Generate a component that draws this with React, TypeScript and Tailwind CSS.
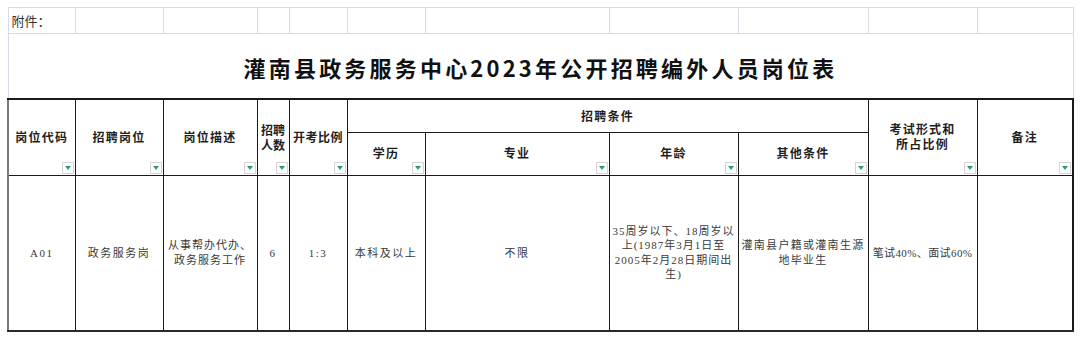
import React from "react";

const cjkSans = { fontFamily: '"Noto Sans CJK SC", "Noto Sans", sans-serif' };
const serif = { fontFamily: '"Liberation Serif", "Noto Sans CJK SC", serif' };

function Filter() {
  return (
    <span className="absolute right-[1px] bottom-[1px] w-[12px] h-[12px] bg-white border border-[#d4d4d4] flex items-center justify-center">
      <svg width="6" height="4" viewBox="0 0 6 4">
        <path d="M0 0 L6 0 L3 4 Z" fill="#2c9f69" />
      </svg>
    </span>
  );
}

const widths = [67, 88, 94, 32, 58, 78, 184, 129, 130, 109, 96];

export default function App() {
  const light = "border border-[#d6d9e8]";
  const hdBase =
    "relative border border-[#1a1a1a] text-center align-middle text-[12px] font-bold text-[#1f1f1f]";
  const hd = `${hdBase} tracking-[1.2px] leading-[14px]`;
  const dcBase =
    "border border-[#1a1a1a] text-center align-middle text-[#3a3a3a] leading-[14.5px] border-b-2 border-b-[#2a2a2a]";
  const dc = `${dcBase} text-[11px] tracking-[1.5px]`;
  return (
    <div className="w-[1080px] h-[338px] bg-white pt-[7px] pl-[7px] overflow-hidden">
      <table className="table-fixed border-collapse w-[1066px]">
        <colgroup>
          {widths.map((w, i) => (
            <col key={i} style={{ width: w }} />
          ))}
        </colgroup>
        <tbody>
          <tr className="h-[26px]">
            <td className={`${light} pl-[3px] text-[13px] text-[#333]`} style={cjkSans}>
              附件：
            </td>
            {widths.slice(1).map((_, i) => (
              <td key={i} className={light}></td>
            ))}
          </tr>
          <tr className="h-[65px]">
            <td
              colSpan={11}
              className="border border-[#d6d9e8] border-b-2 border-b-[#1a1a1a] text-center align-middle text-[22px] font-bold tracking-[3.2px] text-[#111] pt-[4px]"
              style={cjkSans}
            >
              灌南县政务服务中心2023年公开招聘编外人员岗位表
            </td>
          </tr>
          <tr className="h-[34px]" style={cjkSans}>
            <td rowSpan={2} className={`${hd} border-l-2 border-l-[#7a7a7a]`}>
              岗位代码
              <Filter />
            </td>
            <td rowSpan={2} className={hd}>
              招聘岗位
              <Filter />
            </td>
            <td rowSpan={2} className={hd}>
              岗位描述
              <Filter />
            </td>
            <td rowSpan={2} className={`${hdBase} tracking-[0px] leading-[15px]`}>
              招聘
              <br />
              人数
              <Filter />
            </td>
            <td rowSpan={2} className={`${hdBase} tracking-[0.5px] leading-[14px]`}>
              开考比例
              <Filter />
            </td>
            <td colSpan={4} className={hd}>
              招聘条件
            </td>
            <td rowSpan={2} className={`${hdBase} tracking-[1.2px] leading-[15px] pb-[2px]`}>
              考试形式和
              <br />
              所占比例
              <Filter />
            </td>
            <td rowSpan={2} className={`${hd} border-r-2 border-r-[#1a1a1a]`}>
              备注
              <Filter />
            </td>
          </tr>
          <tr className="h-[43px]" style={cjkSans}>
            <td className={`${hd} pb-[2px]`}>
              学历
              <Filter />
            </td>
            <td className={`${hd} pb-[2px]`}>
              专业
              <Filter />
            </td>
            <td className={`${hd} pb-[2px]`}>
              年龄
              <Filter />
            </td>
            <td className={`${hd} pb-[2px]`}>
              其他条件
              <Filter />
            </td>
          </tr>
          <tr className="h-[155px]" style={serif}>
            <td className={`${dc} border-l-2 border-l-[#7a7a7a]`}>A01</td>
            <td className={dc}>政务服务岗</td>
            <td className={`${dcBase} text-[11px] tracking-[1px]`}>
              从事帮办代办、
              <br />
              政务服务工作
            </td>
            <td className={dc}>6</td>
            <td className={dc}>1:3</td>
            <td className={dc}>本科及以上</td>
            <td className={dc}>不限</td>
            <td className={`${dcBase} text-[11px] tracking-[1px]`}>
              35周岁以下、18周岁以
              <br />
              上(1987年3月1日至
              <br />
              2005年2月28日期间出
              <br />
              生)
            </td>
            <td className={`${dcBase} text-[11px] tracking-[1.3px]`}>
              灌南县户籍或灌南生源
              <br />
              地毕业生
            </td>
            <td className={`${dcBase} text-[11px] tracking-[0.4px] whitespace-nowrap px-0`}>
              笔试40%、面试60%
            </td>
            <td className={`${dc} border-r-2 border-r-[#1a1a1a]`}></td>
          </tr>
        </tbody>
      </table>
    </div>
  );
}
